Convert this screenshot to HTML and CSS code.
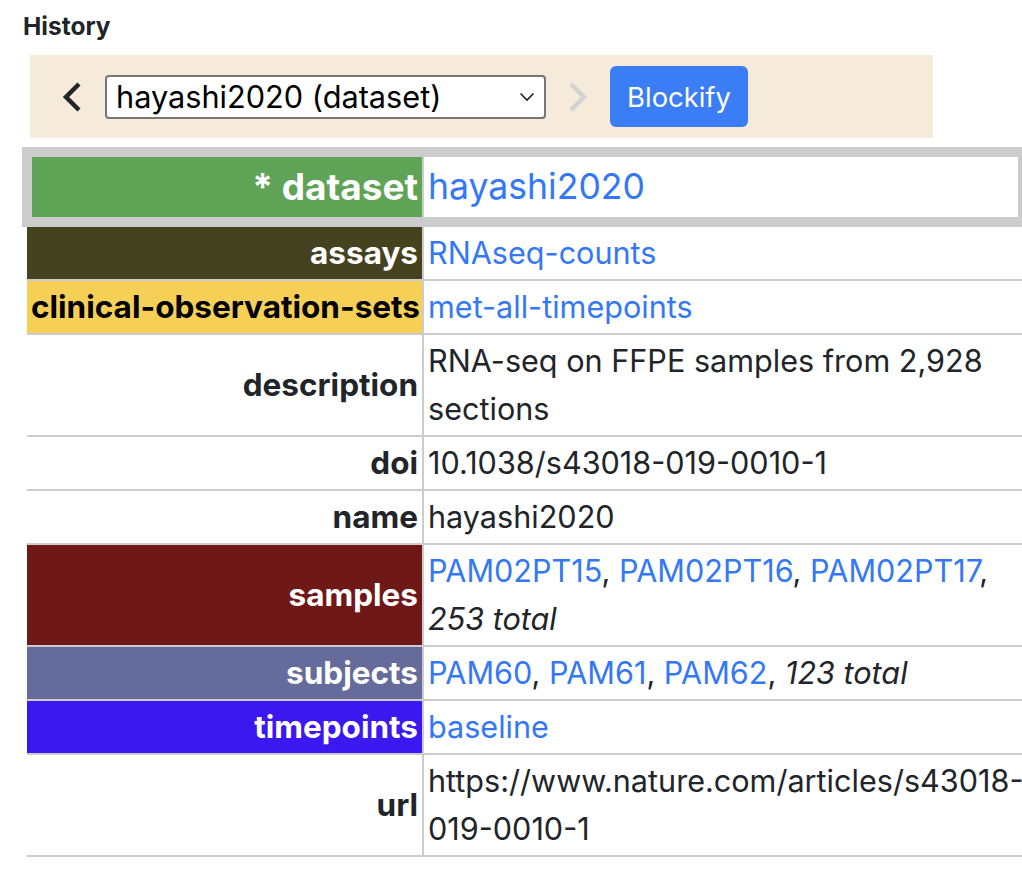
FILE: index.html
```html
<!DOCTYPE html>
<html lang="en">
<head>
<meta charset="utf-8">
<title>History</title>
<link rel="stylesheet" href="styles.css">
</head>
<body>
<div class="page">
  <h2 class="title">History</h2>
  <div class="toolbar">
    <button class="nav nav-back" type="button" aria-label="Back">
      <svg width="20" height="32" viewBox="0 0 20 32"><path d="M17 3 L4 16 L17 29" fill="none" stroke="#212529" stroke-width="4.5"/></svg>
    </button>
    <div class="select" role="combobox">
      <span class="select-text">hayashi2020 (dataset)</span>
      <svg class="caret" width="16" height="10" viewBox="0 0 16 10"><path d="M1.5 1.5 L8 8 L14.5 1.5" fill="none" stroke="#222" stroke-width="1.6"/></svg>
    </div>
    <button class="nav nav-fwd" type="button" aria-label="Forward" disabled>
      <svg width="20" height="32" viewBox="0 0 20 32"><path d="M3 3 L16 16 L3 29" fill="none" stroke="#d2d2d2" stroke-width="4.5"/></svg>
    </button>
    <button class="blockify" type="button">Blockify</button>
  </div>
  <table class="block">
    <tbody>
      <tr class="row-selected">
        <th class="key k-dataset">* dataset</th>
        <td class="val"><a href="#">hayashi2020</a></td>
      </tr>
      <tr>
        <th class="key k-assays">assays</th>
        <td class="val"><a href="#">RNAseq-counts</a></td>
      </tr>
      <tr>
        <th class="key k-clinical">clinical-observation-sets</th>
        <td class="val"><a href="#">met-all-timepoints</a></td>
      </tr>
      <tr>
        <th class="key">description</th>
        <td class="val">RNA-seq on FFPE samples from 2,928 sections</td>
      </tr>
      <tr>
        <th class="key">doi</th>
        <td class="val">10.1038/s43018-019-0010-1</td>
      </tr>
      <tr>
        <th class="key">name</th>
        <td class="val">hayashi2020</td>
      </tr>
      <tr>
        <th class="key k-samples">samples</th>
        <td class="val"><a href="#">PAM02PT15</a>, <a href="#">PAM02PT16</a>, <a href="#">PAM02PT17</a>, <i>253 total</i></td>
      </tr>
      <tr>
        <th class="key k-subjects">subjects</th>
        <td class="val"><a href="#">PAM60</a>, <a href="#">PAM61</a>, <a href="#">PAM62</a>, <i>123 total</i></td>
      </tr>
      <tr>
        <th class="key k-timepoints">timepoints</th>
        <td class="val"><a href="#">baseline</a></td>
      </tr>
      <tr>
        <th class="key">url</th>
        <td class="val">https://www.nature.com/articles/s43018-<wbr>019-0010-1</td>
      </tr>
    </tbody>
  </table>
</div>
</body>
</html>
```
FILE: styles.css
```css
html, body {
  margin: 0;
  padding: 0;
  overflow-x: hidden;
  background: #fff;
}
body {
  font-family: Inter, "Noto Sans", "Liberation Sans", sans-serif;
  color: #212529;
}
.page {
  padding: 0;
}
.title {
  margin: 0;
  padding: 12px 0 0 23px;
  font-size: 24.5px;
  line-height: 28px;
  font-weight: 700;
  color: #212529;
}
.toolbar {
  margin: 15px 0 0 30px;
  width: 903px;
  height: 83px;
  box-sizing: border-box;
  background: #f6ebdb;
  display: flex;
  align-items: center;
  padding-left: 30px;
}
.nav {
  background: none;
  border: 0;
  padding: 0;
  margin: 0;
  width: 24px;
  height: 32px;
  display: flex;
  align-items: center;
  justify-content: center;
}
.nav-back {
  margin-right: 21px;
}
.nav-fwd {
  margin-left: 20px;
  margin-right: 20px;
}
.select {
  width: 441px;
  height: 44px;
  box-sizing: border-box;
  border: 2px solid #767676;
  border-radius: 4px;
  background: #fff;
  display: flex;
  align-items: center;
  justify-content: space-between;
  padding: 0 9px 0 9px;
  font-size: 30.7px;
  color: #000;
}
.caret {
  display: block;
}
.blockify {
  width: 138px;
  height: 61px;
  border: 0;
  border-radius: 6px;
  background: #3a7df5;
  color: #fff;
  font-family: inherit;
  font-size: 27.4px;
  padding: 0;
}
.block {
  border-collapse: collapse;
  margin: 9px 0 0 22px;
  width: 1006px;
  table-layout: fixed;
}
.block th,
.block td {
  border-top: 2px solid #ccc;
  border-bottom: 2px solid #ccc;
  padding: 2px 4px 2px 4px;
  font-size: 30.6px;
  line-height: 48px;
  vertical-align: middle;
}
.block th {
  font-size: 31.5px;
}
.key {
  width: 382px;
  text-align: right;
  font-weight: 700;
  border-right: 2px solid #ccc;
  color: #212529;
  white-space: nowrap;
}
.val {
  text-align: left;
  font-weight: 400;
  color: #212529;
}
.row-selected th,
.row-selected td {
  border-top: 10px solid #ccc;
  border-bottom: 10px solid #ccc;
  line-height: 56px;
  background: #fff;
}
.row-selected td {
  font-size: 35.6px;
  border-right: 10px solid #ccc;
}
.row-selected th {
  font-size: 37px;
  border-left: 10px solid #ccc;
}
.block a {
  color: #3478f6;
  text-decoration: none;
}
.block i {
  font-style: italic;
}
.k-dataset { background: #5ea356 !important; color: #fff; }
.k-assays { background: #45431f; color: #fff; }
.k-clinical { background: #f6cf57; color: #000; }
.k-samples { background: #6e1818; color: #fff; }
.k-subjects { background: #656c9c; color: #fff; }
.k-timepoints { background: #3b17f0; color: #fff; }
```
